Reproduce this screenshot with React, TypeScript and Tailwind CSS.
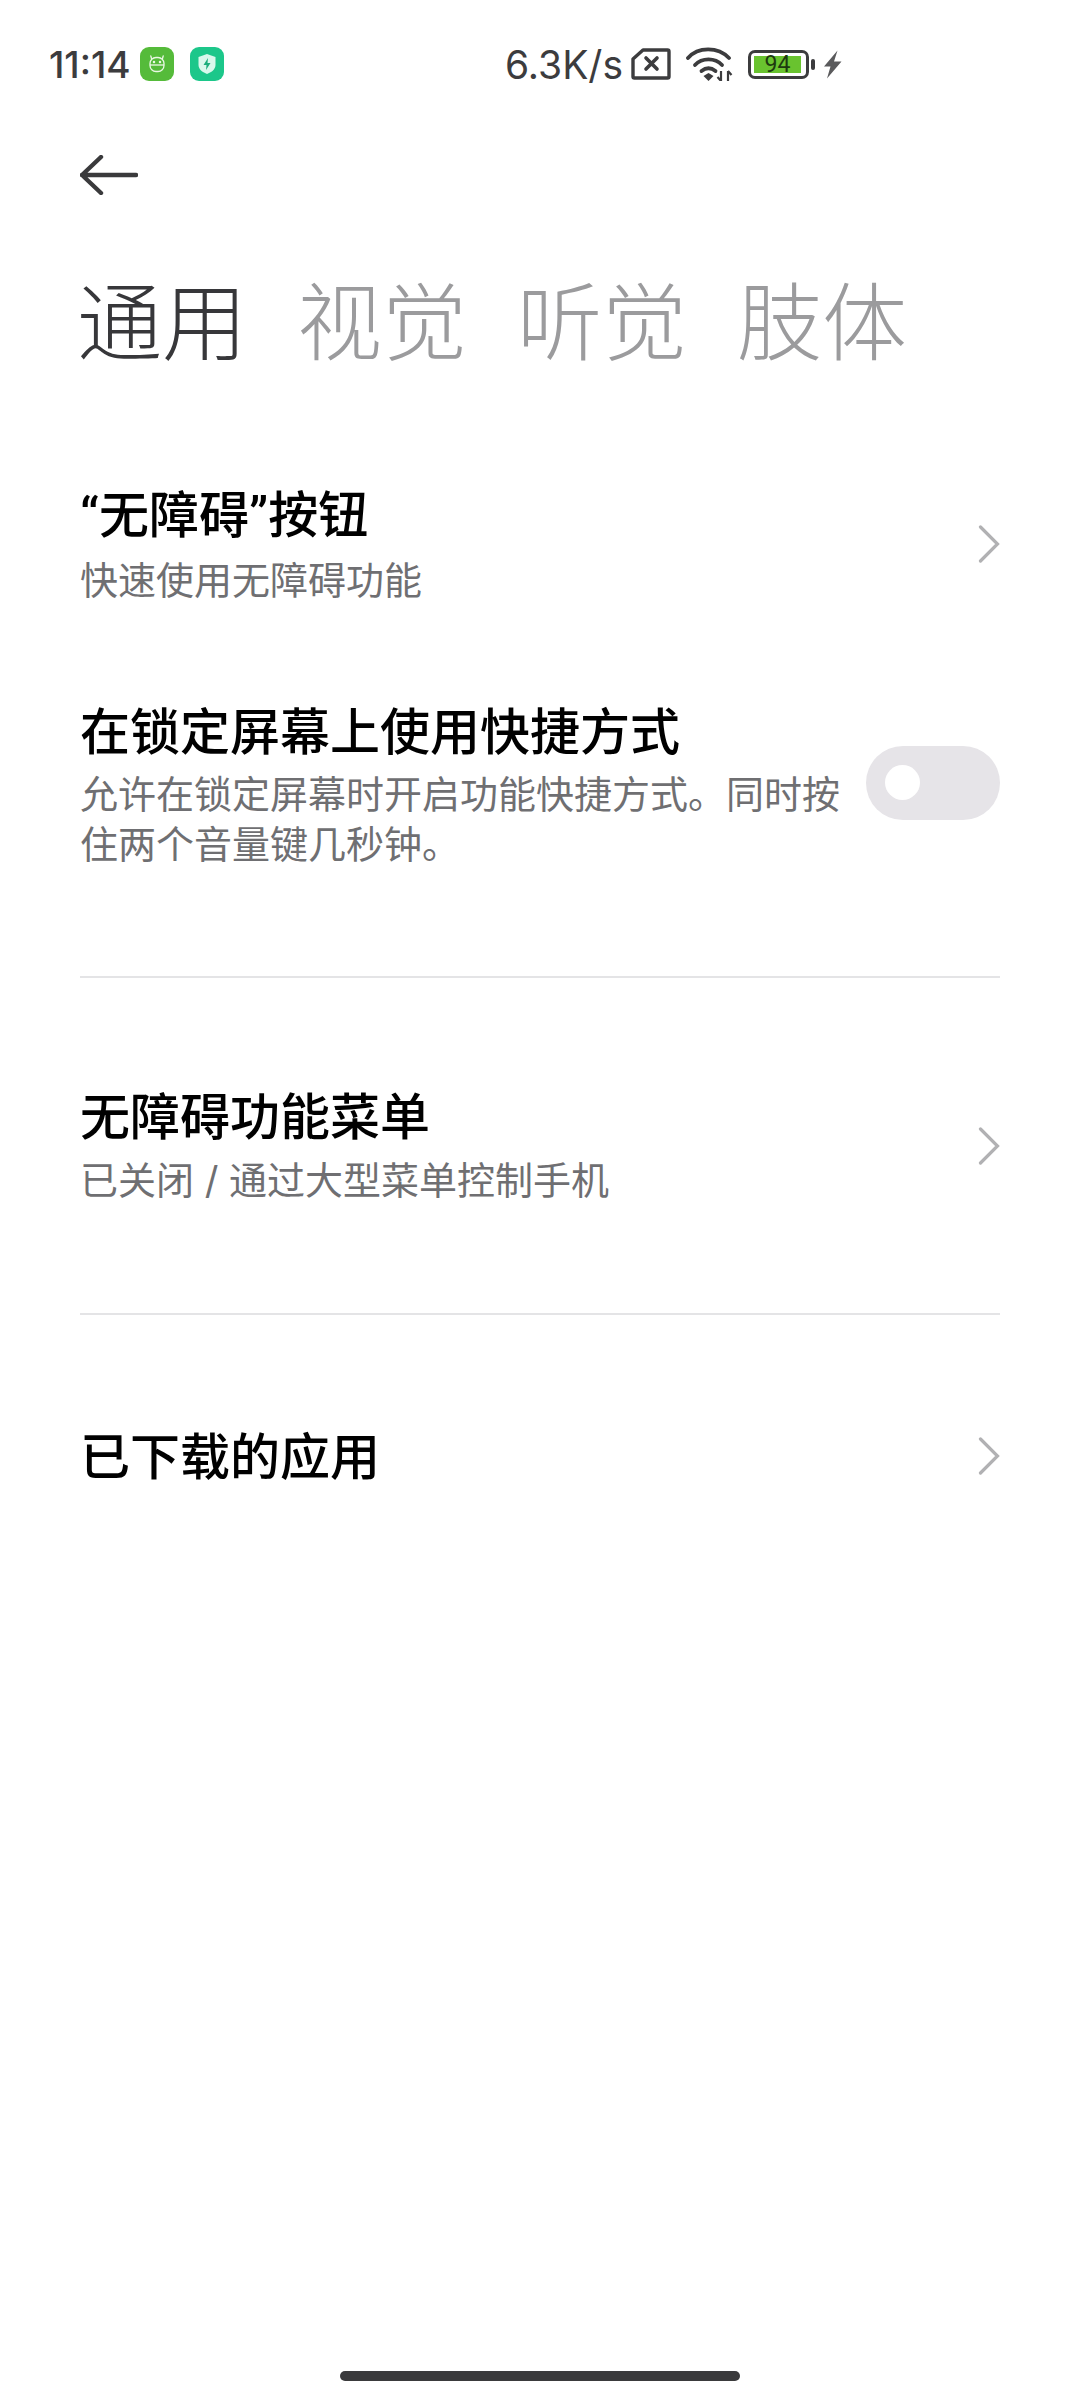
import React from 'react';

const cjk = { fontFamily: '"Noto Sans CJK SC", sans-serif' };
const latin = { fontFamily: 'Roboto, sans-serif' };

const Chevron = () => (
  <svg width="22" height="38" viewBox="0 0 22 38" fill="none" className="mt-[6px] shrink-0">
    <path d="M2.5 2 L19.5 19 L2.5 36" stroke="#b1b1b3" strokeWidth="3.2" strokeLinecap="round" strokeLinejoin="miter" />
  </svg>
);

const AppBadge = () => (
  <div className="flex h-[34px] w-[34px] items-center justify-center rounded-[9px] bg-[#55bb3a]">
    <svg width="22" height="22" viewBox="0 0 22 22" fill="none" stroke="#eaf7e4" strokeWidth="1.3">
      <path d="M5.5 5.5 L4.8 3 M16.5 5.5 L17.2 3" strokeLinecap="round" />
      <rect x="4" y="4.5" width="14" height="14" rx="6" />
      <path d="M4 12 H18" />
      <circle cx="8" cy="9" r="0.6" fill="#eaf7e4" />
      <circle cx="14" cy="9" r="0.6" fill="#eaf7e4" />
    </svg>
  </div>
);

const ShieldBadge = () => (
  <div className="flex h-[34px] w-[34px] items-center justify-center rounded-[9px] bg-[#1cc78a]">
    <svg width="20" height="22" viewBox="0 0 20 22">
      <path d="M10 1 L18.5 4 V12 C18.5 16.5 14 19.5 10 21 C6 19.5 1.5 16.5 1.5 12 V4 Z" fill="#d9f8ec" />
      <path d="M11 5 L6.5 12 H9.5 L9 17 L13.5 10 H10.5 Z" fill="#1cae7c" />
    </svg>
  </div>
);

const SimIcon = () => (
  <svg width="40" height="32" viewBox="0 0 40 32" fill="none">
    <path d="M12 2 H36.5 A1.5 1.5 0 0 1 38 3.5 V28.5 A1.5 1.5 0 0 1 36.5 30 H3.5 A1.5 1.5 0 0 1 2 28.5 V11 Z" stroke="#3c3c3e" strokeWidth="3.4" strokeLinejoin="round" />
    <path d="M15 10 L26 21 M26 10 L15 21" stroke="#3c3c3e" strokeWidth="3.6" strokeLinecap="round" />
  </svg>
);

const WifiIcon = () => (
  <svg width="47" height="34" viewBox="0 0 47 34" fill="none">
    <path d="M2 11 C12 -0.5 32 -0.5 43 11" stroke="#3c3c3e" strokeWidth="3.8" strokeLinecap="round" />
    <path d="M9 18 C16 10.5 29 10.5 36 18" stroke="#3c3c3e" strokeWidth="3.8" strokeLinecap="round" />
    <path d="M15.5 24 C20 20.5 25 20.5 29.5 24" stroke="#3c3c3e" strokeWidth="3.8" strokeLinecap="round" />
    <path d="M17.5 29 L22.5 26 L27.5 29 L22.5 34 Z" fill="#3c3c3e" />
    <path d="M35 24 V34 M31.5 30 L35 34 M42 24 V34 M42 24 L45.5 28" stroke="#3c3c3e" strokeWidth="2.2" />
  </svg>
);

const Battery = () => (
  <div className="flex items-center gap-[2px]">
    <div className="flex h-[29px] w-[61px] items-center rounded-[7px] border-[3px] border-[#3c3c3e] p-[3px]">
      <div className="flex h-full w-[47px] items-center justify-center bg-[#69c32f] text-[23px] leading-none text-[#1d3a10]" style={latin}>
        94
      </div>
    </div>
    <div className="h-[11px] w-[4px] rounded-full bg-[#3c3c3e]" />
  </div>
);

const Bolt = () => (
  <svg width="19" height="29" viewBox="0 0 19 29">
    <path d="M14.5 0.5 L1 16.5 H7.5 L4 28.5 L18.5 11.5 H11 Z" fill="#5a5a5c" />
  </svg>
);

const StatusBar = () => (
  <div className="flex h-[128px] items-center justify-between pl-[49px] pr-[238px]">
    <div className="flex items-center">
      <span className="text-[37px] font-medium leading-none text-[#3c3c3e]" style={{ fontFamily: 'Inter, sans-serif' }}>11:14</span>
      <div className="ml-[9px] flex gap-[16px]">
        <AppBadge />
        <ShieldBadge />
      </div>
    </div>
    <div className="flex items-center">
      <span className="text-[39px] leading-none text-[#3c3c3e]" style={{ fontFamily: 'Inter, sans-serif' }}>6.3K/s</span>
      <div className="ml-[8px]"><SimIcon /></div>
      <div className="ml-[15px]"><WifiIcon /></div>
      <div className="ml-[15px]"><Battery /></div>
      <div className="ml-[8px]"><Bolt /></div>
    </div>
  </div>
);

const Toggle = () => (
  <div className="mt-[5px] flex h-[74px] w-[134px] shrink-0 items-center rounded-full bg-[#e6e4e8] pl-[19px]">
    <div className="h-[35px] w-[35px] rounded-full bg-white" />
  </div>
);

export default function App() {
  const tabs = ['通用', '视觉', '听觉', '肢体'];

  return (
    <div className="flex h-[2400px] w-[1080px] flex-col overflow-hidden bg-white" style={cjk}>
      <StatusBar />

      {/* Back arrow */}
      <div className="mt-[27px] pl-[80px]">
        <svg width="58" height="40" viewBox="0 0 58 40" fill="none">
          <path d="M21 2 L2 20 L21 38 M2 20 H56" stroke="#3a3a3c" strokeWidth="4.4" strokeLinecap="round" strokeLinejoin="round" />
        </svg>
      </div>

      {/* Tabs */}
      <div className="mt-[67px] flex gap-[50px] pl-[77px]">
        {tabs.map((tab, i) => (
          <span key={tab} className={`text-[85px] font-light leading-[110px] ${i === 0 ? 'text-[#37373a]' : 'text-[#9b9b9d]'}`}>
            {tab}
          </span>
        ))}
      </div>

      {/* Accessibility button */}
      <div className="mt-[104px] flex items-center justify-between pl-[80px] pr-[80px]">
        <div>
          <div className="text-[50px] font-medium leading-[70px] text-black">
            <span style={latin}>“</span>无障碍<span style={latin}>”</span>按钮
          </div>
          <div className="text-[38px] leading-[54px] text-[#6f6f72]">快速使用无障碍功能</div>
        </div>
        <Chevron />
      </div>

      {/* Lock screen shortcut */}
      <div className="mt-[88px] flex items-center justify-between pl-[80px] pr-[80px]">
        <div className="w-[770px]">
          <div className="text-[50px] font-medium leading-[70px] text-black">在锁定屏幕上使用快捷方式</div>
          <div className="mt-[4px] text-[38px] leading-[50px] text-[#6f6f72]">允许在锁定屏幕时开启功能快捷方式。同时按住两个音量键几秒钟。</div>
        </div>
        <Toggle />
      </div>

      <div className="mx-[80px] mt-[109px] h-[2px] bg-[#e4e4e6]" />

      {/* Accessibility menu */}
      <div className="mt-[100px] flex items-center justify-between pl-[80px] pr-[80px]">
        <div>
          <div className="text-[50px] font-medium leading-[70px] text-black">无障碍功能菜单</div>
          <div className="mt-[5px] text-[38px] leading-[54px] text-[#6f6f72]" style={{ fontFamily: 'Inter, "Noto Sans CJK SC", sans-serif' }}>已关闭 / 通过大型菜单控制手机</div>
        </div>
        <Chevron />
      </div>

      <div className="mx-[80px] mt-[106px] h-[2px] bg-[#e4e4e6]" />

      {/* Downloaded apps */}
      <div className="mt-[103px] flex items-center justify-between pl-[80px] pr-[80px]">
        <div className="text-[50px] font-medium leading-[70px] text-black">已下载的应用</div>
        <Chevron />
      </div>

      {/* Gesture bar */}
      <div className="mt-auto mb-[19px] h-[10px] w-[400px] self-center rounded-full bg-[#3a3a3c]" />
    </div>
  );
}
